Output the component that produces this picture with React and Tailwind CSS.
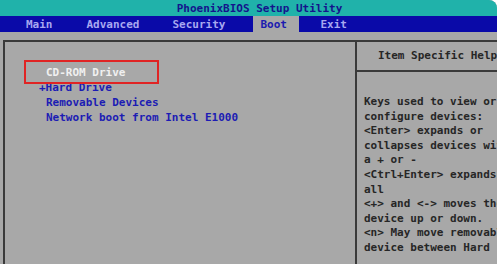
import React from 'react';

const helpLines = [
  'Keys used to view or',
  'configure devices:',
  '<Enter> expands or',
  'collapses devices with',
  'a + or -',
  '<Ctrl+Enter> expands',
  'all',
  '<+> and <-> moves the',
  'device up or down.',
  '<n> May move removable',
  'device between Hard',
];

const App = () => {
  return (
    <div className="w-[501px] h-[264px] bg-white overflow-hidden" style={{ fontFamily: '"DejaVu Sans Mono", "Liberation Mono", monospace' }}>
      <div className="w-[497px] h-[264px] bg-[#a8a8a8] rounded-tr-[8px] overflow-hidden text-[11px] font-bold">
        {/* title */}
        <div className="h-[16px] bg-[#20b2aa] flex items-center justify-center pl-[22px] text-[#14148c] leading-none">
          PhoenixBIOS Setup Utility
        </div>

        {/* menu */}
        <div className="h-[16px] bg-[#0a0aa8] flex items-stretch text-[#a8a8f0] leading-none">
          <span className="ml-[26px] flex items-center">Main</span>
          <span className="ml-[34px] flex items-center">Advanced</span>
          <span className="ml-[33px] flex items-center">Security</span>
          <span className="ml-[28px] w-[46px] pl-[7px] flex items-center bg-[#a8a8a8] text-[#1c1cb0]">Boot</span>
          <span className="ml-[21px] flex items-center">Exit</span>
        </div>

        {/* body */}
        <div className="pt-[8px] pl-[3px]">
          <div className="h-[300px] border-l-2 border-t-2 border-[#3a3a3a] flex">
            <div className="relative w-[350px] shrink-0 pt-[23px] leading-[15px] text-[#1c1cb4]">
              <div className="absolute left-[19px] top-[18px] w-[135px] h-[24px] border-2 border-[#e02424]" />
              <div className="pl-[41px] text-[#f0f0f0] whitespace-pre">CD-ROM Drive</div>
              <div className="pl-[34px] whitespace-pre">+Hard Drive</div>
              <div className="pl-[41px] whitespace-pre">Removable Devices</div>
              <div className="pl-[41px] whitespace-pre">Network boot from Intel E1000</div>
            </div>

            <div className="flex-1 min-w-0 border-l-2 border-[#3a3a3a] text-[#262626]">
              <div className="h-[30px] border-b-2 border-[#3a3a3a] flex items-center pl-[21px] whitespace-pre">
                Item Specific Help
              </div>
              <div className="pt-[23px] pl-[7px] leading-[14.6px]">
                {helpLines.map((line) => (
                  <div key={line} className="whitespace-pre">{line}</div>
                ))}
              </div>
            </div>
          </div>
        </div>
      </div>
    </div>
  );
};

export default App;
